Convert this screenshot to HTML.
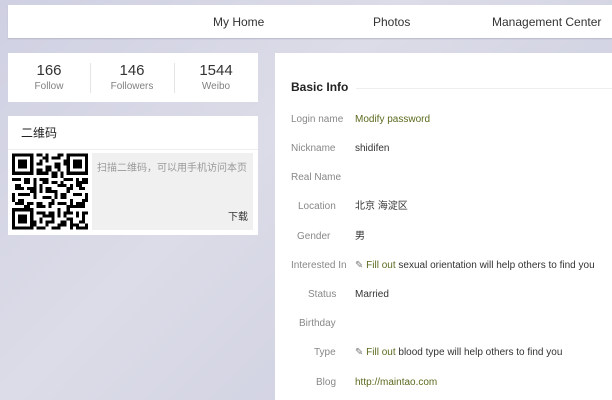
<!DOCTYPE html>
<html><head><meta charset="utf-8"><style>
*{margin:0;padding:0;box-sizing:border-box}
body{width:612px;height:400px;overflow:hidden;position:relative;background:linear-gradient(135deg,#cfd0e2 0%,#dcdce8 40%,#d2d3e3 70%,#d9d9e7 100%);font-family:"Liberation Sans","Noto Sans CJK SC",sans-serif;color:#333}
.a{position:absolute;white-space:nowrap;line-height:12px}
.nav{left:8px;top:5px;width:604px;height:33px;background:#fff;box-shadow:0 1px 1px #b8b8c8}
.nav span{position:absolute;top:15px;font-size:12px;color:#333;line-height:14px}
.card{background:#fff;position:absolute}
.num{font-size:15px;color:#333;text-align:center;width:80px;line-height:17px}
.lab{font-size:10px;color:#808080;text-align:center;width:80px}
.l{font-size:10px;color:#888}
.v{font-size:10px;color:#333}
.g{color:#5a6a1e}
</style></head><body>
<div class="a nav" style="line-height:normal"><span style="left:205px;top:10px">My Home</span><span style="left:365px;top:10px">Photos</span><span style="left:484px;top:10px">Management Center</span></div>

<div class="card" style="left:8px;top:53px;width:250px;height:49px">
<div class="a num" style="left:1px;top:9px">166</div><div class="a lab" style="left:1px;top:28px">Follow</div>
<div class="a num" style="left:84px;top:9px">146</div><div class="a lab" style="left:84px;top:28px">Followers</div>
<div class="a num" style="left:168px;top:9px">1544</div><div class="a lab" style="left:168px;top:28px">Weibo</div>
<div class="a" style="left:82px;top:10px;width:1px;height:30px;background:#e4e4e4"></div>
<div class="a" style="left:166px;top:10px;width:1px;height:30px;background:#e4e4e4"></div>
</div>

<div class="card" style="left:8px;top:116px;width:250px;height:119px">
<div class="a" style="left:13px;top:10px;font-size:12px;color:#222;line-height:14px">二维码</div>
<div class="a" style="left:0;top:33px;width:250px;height:1px;background:#eee"></div>
<div class="a" style="left:84px;top:37px;width:161px;height:77px;background:#f0f0f0"></div>
<div class="a" style="left:89px;top:47px;font-size:10px;color:#999">扫描二维码，可以用手机访问本页</div>
<div class="a" style="left:220px;top:96px;font-size:10px;color:#333">下载</div>
<svg class="a" style="left:4px;top:37px" width="76" height="77" viewBox="0 0 25 25" shape-rendering="crispEdges">
<g fill="#000">
<path d="M0 0h7v7H0zM18 0h7v7h-7zM0 18h7v7H0z"/>
</g>
<g fill="#fff"><path d="M1 1h5v5H1zM19 1h5v5h-5zM1 19h5v5H1z"/></g>
<g fill="#000"><path d="M2 2h3v3H2zM20 2h3v3h-3zM2 20h3v3H2z"/>
<path d="M8 0h2v1H8zM11 0h1v3h-1zM13 1h3v1h-3zM9 2h1v2H9zM14 3h2v2h-2zM12 4h1v2h-1zM8 5h2v2H8zM16 6h1v2h-1zM10 6h2v1h-2zM13 6h2v2h-2z"/>
<path d="M0 8h3v1H0zM4 8h2v2H4zM7 8h1v3H7zM9 8h3v1H9zM13 9h2v1h-2zM17 8h3v1h-3zM21 8h1v3h-1zM23 8h2v2h-2z"/>
<path d="M1 10h2v2H1zM5 11h3v1H5zM9 10h1v3H9zM11 11h2v2h-2zM15 10h3v1h-3zM19 10h1v2h-1zM22 11h2v1h-2z"/>
<path d="M0 13h1v3H0zM2 13h4v1H2zM7 13h1v2H7zM10 14h3v1h-3zM14 12h1v3h-1zM16 13h2v2h-2zM20 13h3v1h-3zM24 13h1v3h-1z"/>
<path d="M2 15h2v2H2zM5 16h2v1H5zM8 16h2v2H8zM12 16h1v2h-1zM15 16h3v1h-3zM19 15h1v3h-1zM21 16h2v2h-2z"/>
<path d="M8 19h3v1H8zM12 19h2v2h-2zM15 18h1v3h-1zM17 19h3v1h-3zM21 19h1v2h-1zM23 19h2v1h-2z"/>
<path d="M9 21h1v2H9zM11 22h3v1h-3zM16 22h2v2h-2zM19 21h1v4h-1zM22 22h2v1h-2zM8 24h3v1H8zM13 24h2v1h-2zM21 24h4v1h-4zM17 20h1v1h-1z"/>
<path d="M10 1h1v1h-1zM15 0h2v1h-2zM8 3h1v1H8zM11 4h1v2h-1zM15 5h1v1h-1zM17 2h1v2h-1zM10 9h2v1h-2zM16 9h1v2h-1zM18 11h1v2h-1zM3 11h1v1H3zM6 12h2v1H6zM12 12h2v1h-2zM22 9h1v2h-1zM1 16h1v1H1zM4 17h2v1H4zM10 17h1v1h-1zM13 15h1v2h-1zM18 17h1v2h-1zM23 15h1v3h-1zM20 17h1v1h-1zM10 20h2v1h-2zM13 21h1v1h-1zM7 22h1v2H7zM15 23h1v2h-1zM18 21h1v1h-1zM20 23h2v1h-2zM23 20h1v2h-1zM24 23h1v1h-1zM11 23h1v1h-1z"/>
</g></svg>
</div>

<div class="card" style="left:275px;top:53px;width:337px;height:347px">
<div class="a" style="left:16px;top:27px;font-size:12px;font-weight:bold;color:#222;line-height:14px">Basic Info</div>
<div class="a" style="left:81px;top:35px;width:256px;height:1px;background:#eee"></div>
</div>
<div class="a l" style="left:291px;top:114px">Login name</div><div class="a v g" style="left:355px;top:114px">Modify password</div>
<div class="a l" style="left:291px;top:143px">Nickname</div><div class="a v" style="left:355px;top:143px">shidifen</div>
<div class="a l" style="left:291px;top:172px">Real Name</div>
<div class="a l" style="left:298px;top:201px">Location</div><div class="a v" style="left:355px;top:201px">北京 海淀区</div>
<div class="a l" style="left:297px;top:231px">Gender</div><div class="a v" style="left:355px;top:231px">男</div>
<div class="a l" style="left:291px;top:260px">Interested In</div><div class="a v" style="left:355px;top:260px"><span style="color:#777">✎</span> <span class="g">Fill out</span> sexual orientation will help others to find you</div>
<div class="a l" style="left:308px;top:289px">Status</div><div class="a v" style="left:355px;top:289px">Married</div>
<div class="a l" style="left:299px;top:318px">Birthday</div>
<div class="a l" style="left:314px;top:347px">Type</div><div class="a v" style="left:355px;top:347px"><span style="color:#777">✎</span> <span class="g">Fill out</span> blood type will help others to find you</div>
<div class="a l" style="left:316px;top:377px">Blog</div><div class="a v g" style="left:355px;top:377px">http://maintao.com</div>
</body></html>
